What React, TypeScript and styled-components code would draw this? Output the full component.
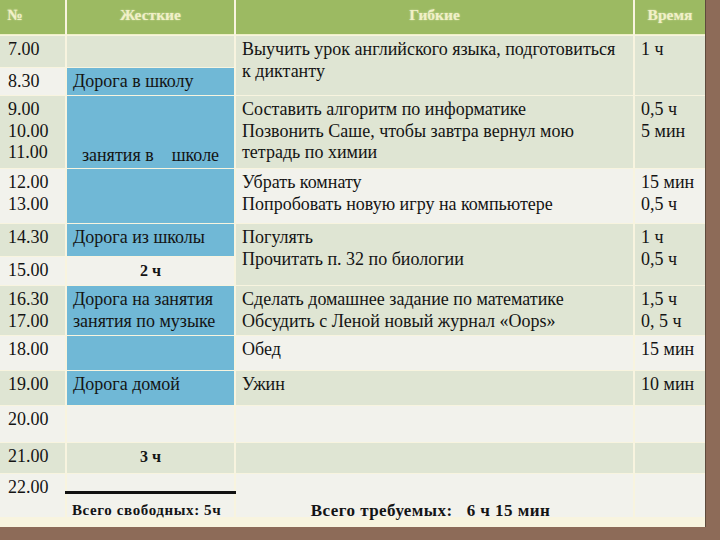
import React from 'react';
import styled, { createGlobalStyle, css } from 'styled-components';

type Tone = 'green' | 'light' | 'blue';

const serif = '"Liberation Serif", "Times New Roman", serif';

const PageStyle = createGlobalStyle`
    html, body {
        margin : 0;
        padding : 0;
        background : #8d6b58;
    }
    body {
        width : 720px;
        height : 540px;
        overflow : hidden;
        font-family : ${serif};
    }
`;

const Sheet = styled.div`
    display : grid;
    width : 705px;
    grid-template-columns : 65px 167px 397px 70px;
    grid-template-rows : 35px 31px 27px 72px 54px 32px 28px 49px 34px 34px 36px 30px 43px;
    column-gap : 2px;
    row-gap : 1px;
    padding-bottom : 10px;
    background : #f8f4df;
    border-right : 1px solid #5e4a3c;
    font-family : ${serif};
    color : #141414;
`;

const tones = {
    green : '#dfe5d3',
    light : '#f2f2ec',
    blue : '#70b8d6',
};

interface PlaceProps {
    $row : number
    $col : number
    $span? : number
}

const place = css<PlaceProps>`
    grid-row : ${p => p.$row + 1} / span ${p => p.$span || 1};
    grid-column : ${p => p.$col};
`;

const HeadCell = styled.div<{ $col : number, $align? : string }>`
    grid-row : 1;
    grid-column : ${p => p.$col};
    background : #9cba62;
    border-bottom : 1px solid #eef0c8;
    padding : 6px 7px 0;
    text-align : ${p => p.$align || 'center'};
    font-size : 15.5px;
    font-weight : bold;
    color : #f1f0c8;
    text-shadow : 0 0 2px rgba(255, 255, 220, 0.55);
`;

const Cell = styled.div<PlaceProps & { $tone : Tone }>`
    ${place}
    background : ${p => tones[p.$tone]};
    padding : 3px 6px 0;
    font-size : 18px;
    line-height : 21.5px;
`;

const TimeCell = styled(Cell)`
    padding-left : 8px;
`;

const SchoolCell = styled(Cell)`
    display : flex;
    align-items : flex-end;
    justify-content : center;
    padding-bottom : 2px;
    white-space : pre;
`;

const Hours = styled(Cell)`
    text-align : center;
    font-size : 16px;
    font-weight : bold;
`;

const TotalFree = styled(Cell)`
    padding : 17px 0 0;
    font-size : 15px;
    font-weight : bold;
    line-height : 15px;
`;

const Rule = styled.div`
    height : 3px;
    margin : 0 -2px 9px;
    background : #111;
`;

const FreeText = styled.div`
    padding-left : 5px;
    letter-spacing : 0.6px;
`;

const TotalNeed = styled(Cell)`
    padding : 28px 8px 0 0;
    text-align : center;
    font-size : 17px;
    font-weight : bold;
    line-height : 17px;
    letter-spacing : 0.45px;
    white-space : pre;
`;

const App: React.FC = () => {
    return (
        <React.Fragment>
            <PageStyle />
            <Sheet>
                <HeadCell $col={1} $align="left">№</HeadCell>
                <HeadCell $col={2}>Жесткие</HeadCell>
                <HeadCell $col={3}>Гибкие</HeadCell>
                <HeadCell $col={4}>Время</HeadCell>

                {/* первая колонка: время */}
                <TimeCell $row={1} $col={1} $tone="green">7.00</TimeCell>
                <TimeCell $row={2} $col={1} $tone="light">8.30</TimeCell>
                <TimeCell $row={3} $col={1} $tone="green">9.00<br />10.00<br />11.00</TimeCell>
                <TimeCell $row={4} $col={1} $tone="light">12.00<br />13.00</TimeCell>
                <TimeCell $row={5} $col={1} $tone="green">14.30</TimeCell>
                <TimeCell $row={6} $col={1} $tone="light">15.00</TimeCell>
                <TimeCell $row={7} $col={1} $tone="green">16.30<br />17.00</TimeCell>
                <TimeCell $row={8} $col={1} $tone="light">18.00</TimeCell>
                <TimeCell $row={9} $col={1} $tone="green">19.00</TimeCell>
                <TimeCell $row={10} $col={1} $tone="light">20.00</TimeCell>
                <TimeCell $row={11} $col={1} $tone="green">21.00</TimeCell>
                <TimeCell $row={12} $col={1} $tone="light">22.00</TimeCell>

                {/* жесткие */}
                <Cell $row={1} $col={2} $tone="green" />
                <Cell $row={2} $col={2} $tone="blue">Дорога в школу</Cell>
                <SchoolCell $row={3} $col={2} $tone="blue">{'занятия в    школе'}</SchoolCell>
                <Cell $row={4} $col={2} $tone="blue" />
                <Cell $row={5} $col={2} $tone="blue">Дорога из школы</Cell>
                <Hours $row={6} $col={2} $tone="light">2 ч</Hours>
                <Cell $row={7} $col={2} $tone="blue">Дорога на занятия<br />занятия по музыке</Cell>
                <Cell $row={8} $col={2} $tone="blue" />
                <Cell $row={9} $col={2} $tone="blue">Дорога домой</Cell>
                <Cell $row={10} $col={2} $tone="light" />
                <Hours $row={11} $col={2} $tone="green">3 ч</Hours>
                <TotalFree $row={12} $col={2} $tone="light">
                    <Rule />
                    <FreeText>Всего свободных: 5ч</FreeText>
                </TotalFree>

                {/* гибкие */}
                <Cell $row={1} $span={2} $col={3} $tone="green">
                    Выучить урок английского языка, подготовиться<br />к диктанту
                </Cell>
                <Cell $row={3} $col={3} $tone="green">
                    Составить алгоритм по информатике<br />
                    Позвонить Саше, чтобы завтра вернул мою<br />
                    тетрадь по химии
                </Cell>
                <Cell $row={4} $col={3} $tone="light">
                    Убрать комнату<br />Попробовать новую игру на компьютере
                </Cell>
                <Cell $row={5} $span={2} $col={3} $tone="green">
                    Погулять<br />Прочитать п. 32 по биологии
                </Cell>
                <Cell $row={7} $col={3} $tone="green">
                    Сделать домашнее задание по математике<br />
                    Обсудить с Леной новый журнал «Oops»
                </Cell>
                <Cell $row={8} $col={3} $tone="light">Обед</Cell>
                <Cell $row={9} $col={3} $tone="green">Ужин</Cell>
                <Cell $row={10} $col={3} $tone="light" />
                <Cell $row={11} $col={3} $tone="green" />
                <TotalNeed $row={12} $col={3} $tone="light">{'Всего требуемых:   6 ч 15 мин'}</TotalNeed>

                {/* время */}
                <Cell $row={1} $span={2} $col={4} $tone="green">1 ч</Cell>
                <Cell $row={3} $col={4} $tone="green">0,5 ч<br />5 мин</Cell>
                <Cell $row={4} $col={4} $tone="light">15 мин<br />0,5 ч</Cell>
                <Cell $row={5} $span={2} $col={4} $tone="green">1 ч<br />0,5 ч</Cell>
                <Cell $row={7} $col={4} $tone="green">1,5 ч<br />0, 5 ч</Cell>
                <Cell $row={8} $col={4} $tone="light">15 мин</Cell>
                <Cell $row={9} $col={4} $tone="green">10 мин</Cell>
                <Cell $row={10} $col={4} $tone="light" />
                <Cell $row={11} $col={4} $tone="green" />
                <Cell $row={12} $col={4} $tone="light" />
            </Sheet>
        </React.Fragment>
    );
};

export default App;
